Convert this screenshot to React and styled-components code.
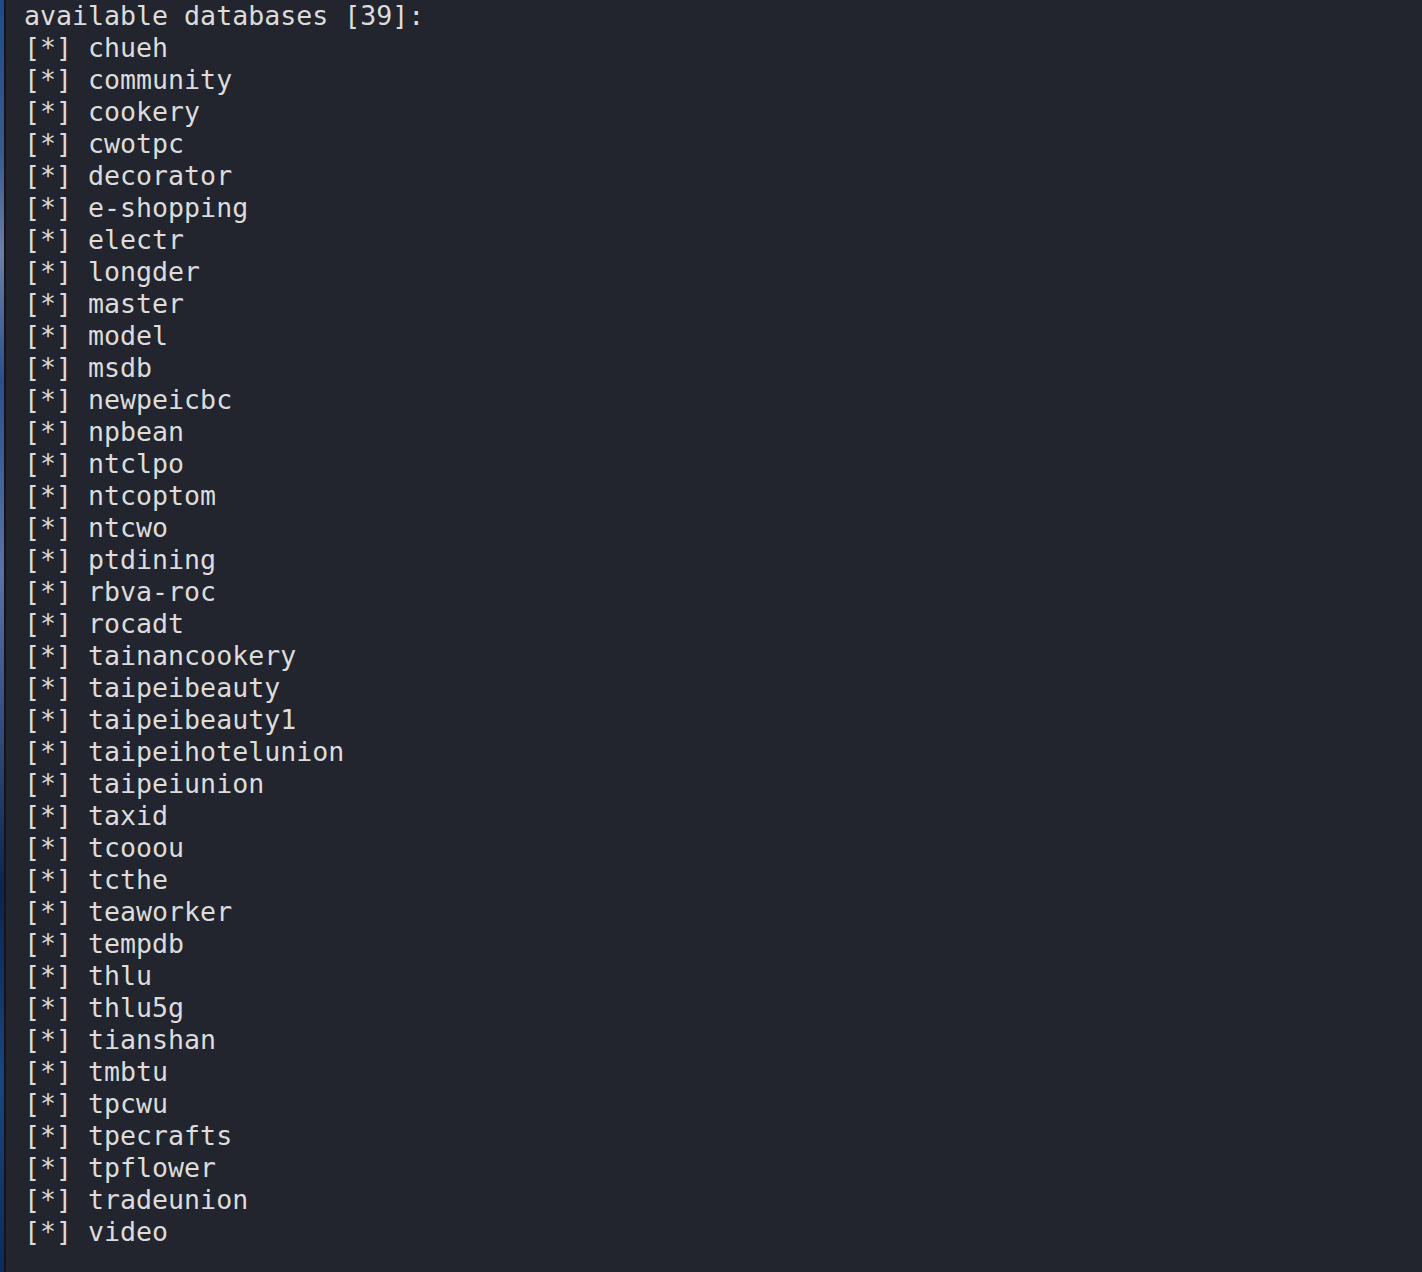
import React from "react";
import styled, { createGlobalStyle } from "styled-components";

const GlobalStyle = createGlobalStyle`
  html, body {
    margin: 0;
    padding: 0;
    background: #23252e;
  }
`;

const Screen = styled.div`
  display: flex;
  width: 1422px;
  height: 1272px;
  overflow: hidden;
  background: #23252e;
`;

const Desktop = styled.div`
  width: 4px;
  flex-shrink: 0;
  background: linear-gradient(
    180deg,
    #1d4a8a 0%,
    #3a5a8e 12%,
    #6c7fa8 20%,
    #2c4f8c 30%,
    #5a73a8 45%,
    #0c2450 70%,
    #1a4680 85%,
    #0c2a5a 100%
  );
`;

const Edge = styled.div`
  width: 2px;
  flex-shrink: 0;
  background: #14151b;
`;

const Terminal = styled.pre`
  margin: 0;
  padding: 0 0 0 18px;
  flex: 1;
  font-family: "DejaVu Sans Mono", "Liberation Mono", monospace;
  font-size: 26.6px;
  line-height: 32px;
  color: #dcdcdc;
  white-space: pre;
`;

const Line = styled.div`
  height: 32px;
`;

const databases = [
  "chueh", "community", "cookery", "cwotpc", "decorator", "e-shopping",
  "electr", "longder", "master", "model", "msdb", "newpeicbc", "npbean",
  "ntclpo", "ntcoptom", "ntcwo", "ptdining", "rbva-roc", "rocadt",
  "tainancookery", "taipeibeauty", "taipeibeauty1", "taipeihotelunion",
  "taipeiunion", "taxid", "tcooou", "tcthe", "teaworker", "tempdb", "thlu",
  "thlu5g", "tianshan", "tmbtu", "tpcwu", "tpecrafts", "tpflower",
  "tradeunion", "video",
];

const App = () => {
  return (
    <Screen>
      <GlobalStyle />
      <Desktop />
      <Edge />
      <Terminal>
        <Line>available databases [39]:</Line>
        {databases.map((db) => (
          <Line key={db}>[*] {db}</Line>
        ))}
      </Terminal>
    </Screen>
  );
};

export default App;
